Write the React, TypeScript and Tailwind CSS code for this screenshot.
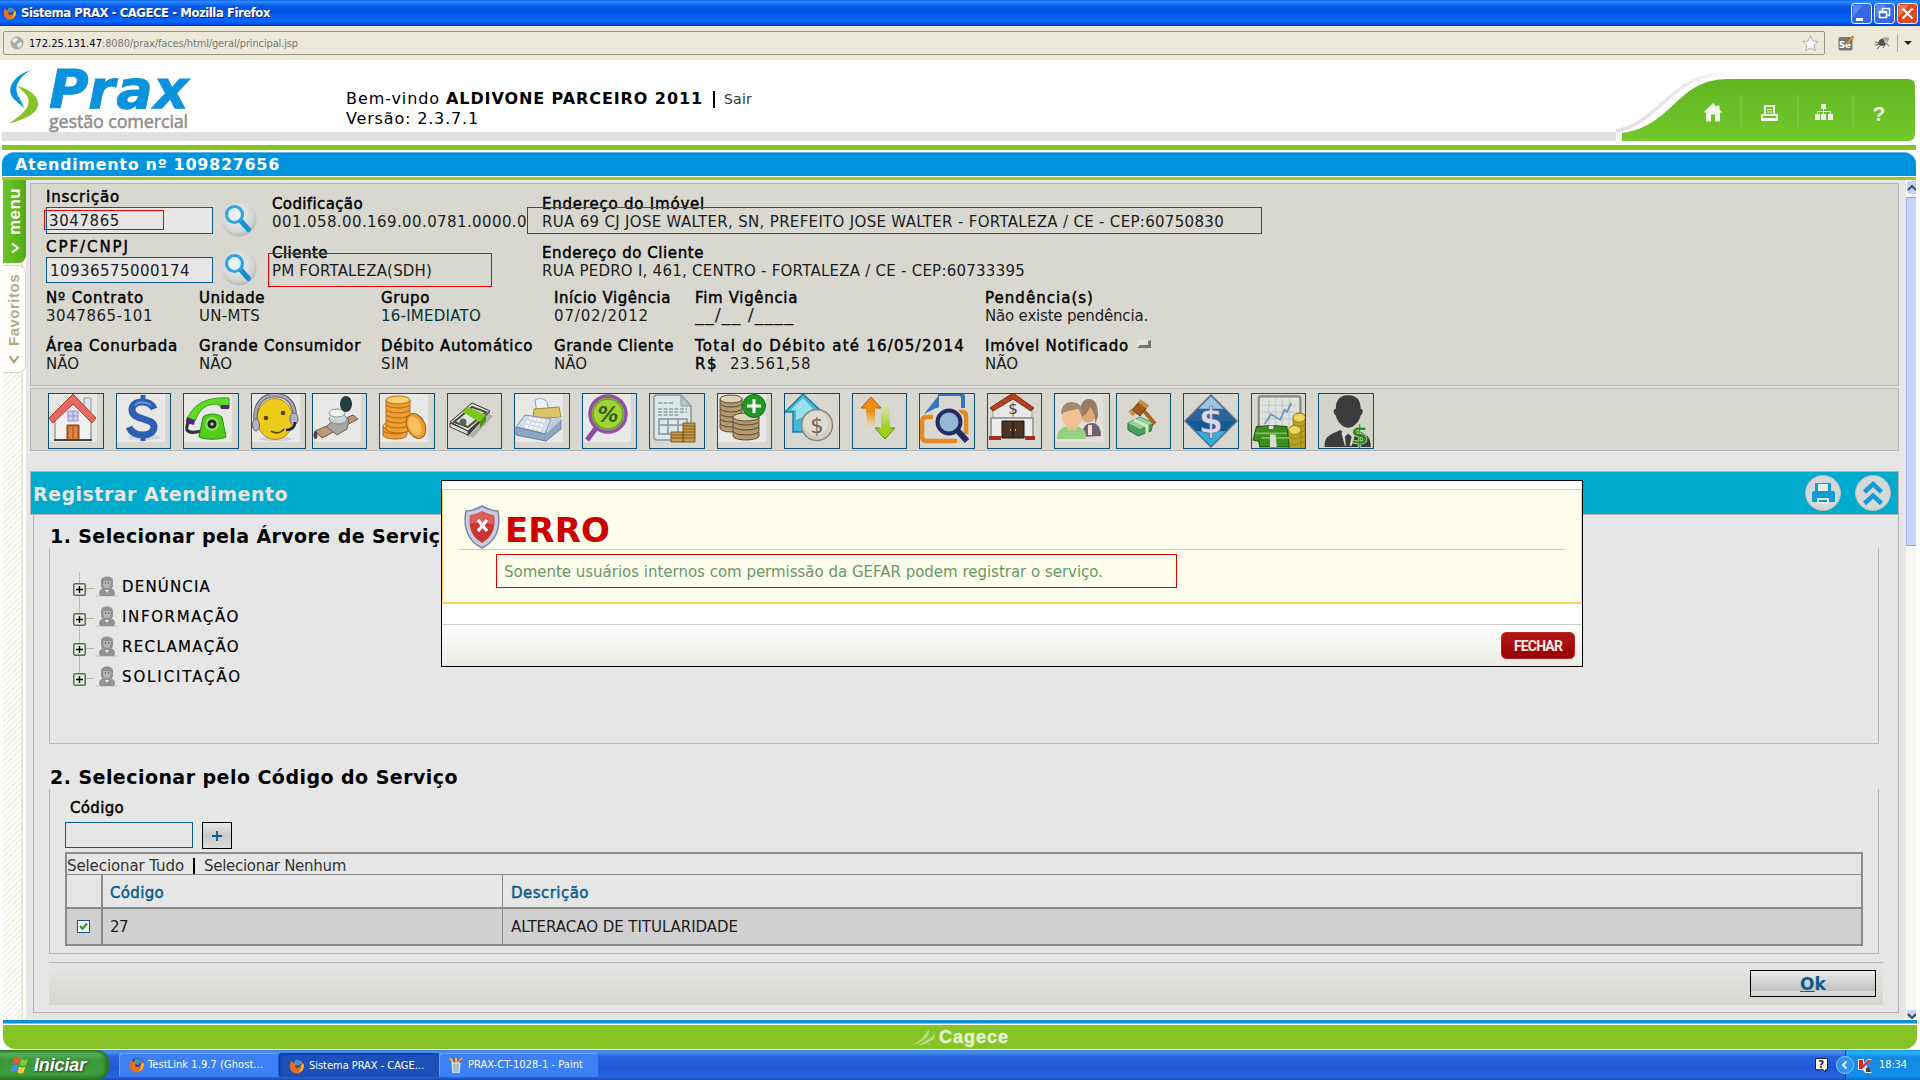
import { useLayoutEffect, useRef, type ReactNode } from "react";

/* Single line of text tracked so that it spans a given length. */
function T({ w, className = "", children }: { w: number; className?: string; children: string }) {
  const ref = useRef<HTMLSpanElement>(null);
  useLayoutEffect(() => {
    const el = ref.current;
    if (!el) return;
    el.style.letterSpacing = "0px";
    const box = el.getBoundingClientRect();
    const natural = Math.max(box.width, getComputedStyle(el).writingMode === "vertical-rl" ? box.height : 0);
    el.style.letterSpacing = `${(w - natural) / children.length}px`;
  }, [w, children]);
  return (
    <span ref={ref} className={`inline-block whitespace-pre ${className}`}>
      {children}
    </span>
  );
}

const LABEL = "block text-[15px] leading-[18px] text-black [-webkit-text-stroke:0.45px_black]";
const VALUE = "block text-[15px] leading-[18px] text-[#1c1c1c]";

function Field({ label, lw, value, vw, vc = "" }: { label: string; lw: number; value: string; vw: number; vc?: string }) {
  return (
    <div className="whitespace-nowrap">
      <div className="flex h-[18px]"><T w={lw} className={LABEL}>{label}</T></div>
      <div className="flex h-[18px]"><T w={vw} className={`${VALUE} ${vc}`}>{value}</T></div>
    </div>
  );
}

function Firefox({ className = "" }: { className?: string }) {
  return (
    <svg viewBox="0 0 16 16" className={`h-4 w-4 shrink-0 ${className}`}>
      <circle cx="8" cy="8" r="7" fill="#1c4a9c" />
      <path d="M6 2a5 4 0 0 1 7 3l-4 3-4-2z" fill="#3d8fd8" />
      <path d="M2.500 2.500 4 5c2-1 3 0 4 1L6 7.500C6 10 9 11 11 9c1.500-2 1-4 0-6 3 1 4.500 4 4 6.500C14 14 10 16 7 15.500 2 15 0 10 1 6z" fill="#e8701a" />
      <path d="M14.500 6c.5 4-1.500 7.500-5 8.500C12 12 13 10 12.500 7z" fill="#fbc83a" />
    </svg>
  );
}

function Magnifier() {
  return (
    <svg viewBox="0 0 36 36" className="h-9 w-9">
      <defs>
        <radialGradient id="disc" cx="45%" cy="40%" r="60%">
          <stop offset="0" stopColor="#f2f2f2" />
          <stop offset=".75" stopColor="#d4d6d6" />
          <stop offset="1" stopColor="#b4bab9" />
        </radialGradient>
      </defs>
      <circle cx="18" cy="18" r="17.500" fill="url(#disc)" />
      <path d="m19 19 8.500 9.500" stroke="#1590d4" strokeWidth="5" strokeLinecap="round" />
      <circle cx="13.500" cy="13.500" r="8" fill="#e9f3f8" stroke="#35a5e0" strokeWidth="3.200" />
    </svg>
  );
}

const pale = <rect width="48" height="48" fill="#e8e8e6" />;

function Dollar({ x, y, s, fill, stroke = "none" }: { x: number; y: number; s: number; fill: string; stroke?: string }) {
  return (
    <text x={x} y={y} fontSize={s} fontWeight="bold" textAnchor="middle" fill={fill} stroke={stroke} strokeWidth=".6">$</text>
  );
}

function Stack({ x, y, n, rx = 9, c = "#f0a030", e = "#a85c10", t = "#ffcf70" }: { x: number; y: number; n: number; rx?: number; c?: string; e?: string; t?: string }) {
  return (
    <g stroke={e} strokeWidth=".9">
      {Array.from({ length: n }, (_, i) => (
        <path key={i} d={`M${x - rx} ${y - i * 5}v4a${rx} 4 0 0 0 ${rx * 2} 0v-4`} fill={c} />
      ))}
      <ellipse cx={x} cy={y - (n - 1) * 5} rx={rx} ry="4" fill={t} />
    </g>
  );
}

const icons: { key: string; art: ReactNode; w?: string; ml?: string }[] = [
  {
    key: "home",
    art: (<>{pale}
      <path d="M35 4h7v14h-7z" fill="#dfe6ea" stroke="#8a979e" />
      <path d="M6 25 24 8l18 17v21H6z" fill="#f0f0ee" stroke="#777" />
      <path d="M24 0 0 24l4 5L24 10l19 19 4-5z" fill="#e66a60" stroke="#b03a34" />
      <path d="M18 31h12v15H18z" fill="#c4682e" stroke="#844018" /><path d="M20 33h3v12h-3zm5 0h3v12h-3z" fill="#de8848" />
      <path d="M19 17h10v10H19z" fill="#c4d4f2" stroke="#a08cc0" /><path d="M24 17v10M19 22h10" stroke="#a08cc0" />
      <path d="M5 46h38" stroke="#444" strokeWidth="2" /></>),
  },
  {
    key: "dollar",
    art: (<>{pale}<ellipse cx="27" cy="43" rx="16" ry="3" fill="#cdd2dc" />
      <path d="M37 15c-2-5-7-7-12-7-6 0-10 3-10 8 0 11 22 7 22 17 0 5-5 8-11 8-7 0-12-3-14-8" fill="none" stroke="#2f60b4" strokeWidth="7" />
      <path d="M26 1v10M26 38v9" stroke="#2f60b4" strokeWidth="5" /><path d="M34 11c-4-3-12-4-16 0" stroke="#6f98dc" strokeWidth="2" fill="none" /></>),
  },
  {
    key: "phone",
    art: (<>{pale}<path d="M10 25c-6 2-8 6-7 11 3 4 9 2 14 1" fill="none" stroke="#333" strokeWidth="3" />
      <path d="M2 27C10 9 22 3 45 4v10h-8l-3-4C22 10 16 14 11 27z" fill="#5edc22" stroke="#3a9a16" />
      <path d="M3 23l8 3-1 5-8-2zM37 11h8v4h-8z" fill="#5b2470" />
      <path d="M19 23c5-4 14-4 19 0l4 20c-8 3-20 3-27 0z" fill="#4fcd1c" stroke="#2f8c10" />
      <circle cx="28" cy="30" r="7" fill="#8cdc60" /><circle cx="28" cy="30" r="4.500" fill="#1f2f18" /><circle cx="28" cy="30" r="1.500" fill="#ddd" /></>),
  },
  {
    key: "agent",
    art: (<>{pale}<ellipse cx="24" cy="45" rx="16" ry="2" fill="#cfcde0" />
      <ellipse cx="23" cy="25" rx="18" ry="20.500" fill="#ecca1c" stroke="#a98a10" />
      <path d="M4 29C1 12 10 1 23 1s22 10 19 26" fill="none" stroke="#666072" strokeWidth="4.500" /><path d="M4 29C1 12 10 1 23 1s22 10 19 26" fill="none" stroke="#aaa4b8" strokeWidth="2.500" />
      <ellipse cx="4" cy="31" rx="3.500" ry="6" fill="#b7b3c4" stroke="#66627a" /><ellipse cx="42" cy="25" rx="4" ry="6" fill="#b7b3c4" stroke="#66627a" />
      <circle cx="14" cy="24" r="2.300" fill="#5a4600" /><circle cx="31" cy="19" r="2.300" fill="#5a4600" />
      <path d="M19 37c5 3 10 2 13-2" fill="none" stroke="#5a4600" strokeWidth="2" /><path d="M43 28c0 6-4 8-9 8" fill="none" stroke="#222" strokeWidth="2.500" /></>),
  },
  {
    key: "meter", w: "w-[55px]", ml: "-ml-1.5",
    art: (<>{pale}<path d="M2 37 40 21l5 4L9 44z" fill="#bd9877" stroke="#75583e" /><path d="M14 33c2-6 16-12 22-8l-2 10-10 6z" fill="#a8a8a0" stroke="#666" />
      <ellipse cx="25" cy="25" rx="9" ry="5" fill="#c8d4d4" stroke="#7a8888" /><path d="M17 18h14v7H17z" fill="#cfdcdc" /><ellipse cx="24" cy="19" rx="8" ry="4" fill="#eef4f4" stroke="#8a9898" />
      <ellipse cx="33" cy="10" rx="6" ry="8" fill="#243c40" /><ellipse cx="2.500" cy="41" rx="2" ry="4" fill="#544" /></>),
  },
  {
    key: "coins",
    art: (<>{pale}<Stack x={15} y={37} n={2} rx={12} /><Stack x={18} y={31} n={6} rx={12} />
      <ellipse cx="36" cy="32" rx="9" ry="13" fill="#ef9a2c" stroke="#a85c10" transform="rotate(-25 36 32)" /><ellipse cx="35" cy="32" rx="6" ry="10" fill="#ffc060" transform="rotate(-25 35 32)" /></>),
  },
  {
    key: "cash",
    art: (<><path d="m25 44 20-22-4-2-20 22z" fill="#888" opacity=".5" /><path d="m2 30 22-21 18 9-22 24z" fill="#3a443c" /><path d="m2 33 18 8v-4L2 29z" fill="#ddd" stroke="#444" /><path d="m2 28 22-19 18 8-22 20z" fill="#dfe5da" stroke="#333" />
      <path d="m6 28 18-15 14 5-18 15z" fill="none" stroke="#454f44" strokeWidth="2" /><path d="m14 18 6-5 18 8-6 7z" fill="#78c81c" /><path d="m32 28 6-7v6l-6 7z" fill="#4d9410" /><circle cx="15" cy="28" r="3.500" fill="#5a645a" /></>),
  },
  {
    key: "register",
    art: (<>{pale}<path d="M20 6c5-3 10-1 12 2l2 12H22z" fill="#eaf3fb" stroke="#8ba4bd" /><path d="m19 15 25-2 2 10-28 2z" fill="#dcc466" stroke="#a08a38" />
      <path d="m10 21 26 4-6 15-29-7z" fill="#d5dbe6" stroke="#8191a8" /><path d="m1 33 29 7 16-15v10L31 47 1 41z" fill="#8fa6c2" stroke="#6b829f" /><path d="m14 24 16 3M12 28l17 4M10 32l17 4" stroke="#fff" strokeWidth="2" strokeDasharray="3 1.500" /><path d="m36 25 10-2v3L31 40z" fill="#bccbdd" /></>),
  },
  {
    key: "percent",
    art: (<>{pale}<path d="M14 33 4 46" stroke="#8c4ca4" strokeWidth="5" /><circle cx="25" cy="20" r="18" fill="#a2d43a" stroke="#9050a8" strokeWidth="3.500" /><circle cx="25" cy="20" r="15" fill="none" stroke="#6c9c28" strokeWidth="1.500" />
      <text x="25" y="28" fontSize="21" fontWeight="bold" fontStyle="italic" textAnchor="middle" fill="#386020">%</text></>),
  },
  {
    key: "report",
    art: (<><path d="M7 1h24l10 11v34H7q-3 0-3-3V4q0-3 3-3z" fill="#dde7e8" stroke="#87989c" strokeWidth="1.500" /><path d="M31 1v11h10z" fill="#b6c6ca" stroke="#87989c" />
      <path d="M8 9h16M8 15h29M8 18h29M8 21h22" stroke="#8e9da1" strokeWidth="1.400" strokeDasharray="4 1.500" /><path d="M9 25h28v15H9zM9 31h28M18 25v15M28 25v15" fill="none" stroke="#8296a0" strokeWidth="1.500" />
      <path d="M21 38h12v10H21zM33 29h12v19H33z" fill="#c79a50" stroke="#7d5720" /><path d="M21 41h12M21 44h12M33 32h12M33 35h12M33 38h12M33 41h12M33 44h12" stroke="#7d5720" /></>),
  },
  {
    key: "coins-add",
    art: (<>{pale}<Stack x={13} y={30} n={6} rx={11} c="#b39a70" e="#4d3e28" t="#ded4bc" /><Stack x={28} y={38} n={4} rx={13} c="#b39a70" e="#4d3e28" t="#ded4bc" />
      <circle cx="36" cy="12" r="11.500" fill="#1e9a24" stroke="#0e7010" /><path d="M36 5v14M29 12h14" stroke="#fff" strokeWidth="3" /></>),
  },
  {
    key: "up-dollar",
    art: (<><path d="M18 0 0 18h8v20h22V18h7z" fill="#45b8d8" stroke="#217d9c" strokeWidth="1.500" /><path d="M18 4 6 16h5v10l17-8v-3z" fill="#9ce0f0" /><circle cx="32" cy="31" r="15.500" fill="#d2cec2" stroke="#88847a" strokeWidth="1.500" /><circle cx="31" cy="29" r="12" fill="#dfdcd2" /><text x="32" y="39" fontSize="21" textAnchor="middle" fill="#66645e">$</text></>),
  },
  {
    key: "arrows",
    art: (<><defs>
      <linearGradient id="upA" x1="0" y1="0" x2="0" y2="1"><stop offset=".5" stopColor="#f08c14" /><stop offset="1" stopColor="#f8c040" stopOpacity=".2" /></linearGradient>
      <linearGradient id="dnA" x1="0" y1="0" x2="0" y2="1"><stop offset="0" stopColor="#c8e840" stopOpacity=".2" /><stop offset=".6" stopColor="#a0d020" /></linearGradient></defs>
      <path d="M18 3 8 14h5l1 18 8-1V14h6z" fill="url(#upA)" /><path d="M13 14H8L18 3l10 11h-5" fill="none" stroke="#b0620c" />
      <path d="M32 45 42 34h-5L36 12h-8v22h-6z" fill="url(#dnA)" /><path d="M37 34h5L32 45 22 34h5" fill="none" stroke="#5c8c14" /></>),
  },
  {
    key: "search-doc",
    art: (<><path d="M18 0h21q4 0 4 4v10" fill="none" stroke="#3a74b8" strokeWidth="4" /><path d="M4 20 19 1v11q0 2-3 2z" fill="#3a74b8" /><path d="M13 23H7q-5 0-5 5v14q0 5 5 5h30M38 18h4q4 0 4 4v18" fill="none" stroke="#e48a20" strokeWidth="4.500" /><circle cx="29" cy="28" r="12.500" fill="#92b8d4" stroke="#dcdcd6" strokeWidth="5" /><circle cx="29" cy="28" r="11.500" fill="#92b8d4" stroke="#242c64" strokeWidth="4" /><path d="m37 36 10 11" stroke="#242c64" strokeWidth="6" /></>),
  },
  {
    key: "bank",
    art: (<><path d="M5 14 25 2l19 12v10H5z" fill="#e8e8e8" stroke="#999" /><path d="M2 14 25-1l21 15-3 3L25 5 5 17z" fill="#b5441e" stroke="#7d2a10" /><text x="25" y="20" fontSize="15" textAnchor="middle" fill="#444">$</text><path d="M3 24h42v19H3z" fill="#ececec" stroke="#8c8c8c" strokeWidth="1.500" /><path d="M14 27h22v17H14z" fill="#4a3426" stroke="#22160e" /><path d="M25 27v17" stroke="#1c120c" /><path d="M22 36h1M27 36h1" stroke="#e0b050" strokeWidth="2" /><path d="M1 42h12v4H1zM37 42h10v4H37z" fill="#a03018" /></>),
  },
  {
    key: "people",
    art: (<><rect width="48" height="48" fill="#e2e0dd" /><g opacity=".85"><path d="M27 43c0-10 4-14 10-14 5 0 9 4 9 13z" fill="#5a4c58" /><circle cx="33" cy="20" r="8.500" fill="#dca06a" /><path d="M24 24C24 10 29 4 34 5c7 0 9 7 9 17l-3 9c1-8-1-14-5-18-2 5-5 8-7 9z" fill="#8d6a4c" /><path d="M35 31v10" stroke="#f4e0d0" strokeWidth="4" /><path d="M2 45c0-9 5-13 15-13s15 4 14 13z" fill="#8bce70" /><path d="M12 30h10v6H12z" fill="#f0b880" /><circle cx="17" cy="24" r="10" fill="#f3bd84" /><path d="M6 21C6 10 12 8 17 8s11 3 11 13c-3-3-4-6-6-6-5 2-12 1-16 6z" fill="#a0785a" /></g></>),
  },
  {
    key: "auction", ml: "-ml-1.5",
    art: (<><path d="m11 29 12-6 13 6-2 8-13 5-10-6z" fill="#4c9c60" stroke="#2c6c40" /><path d="m11 29 12-6 13 6-13 6z" fill="#8cd49c" /><path d="m17 26 13 6v8" stroke="#d8e8c0" strokeWidth="3" fill="none" /><path d="m23 12 15 18" stroke="#a86420" strokeWidth="4" /><path d="m15 16 8-9 7 6-7 9z" fill="#a05c1c" stroke="#603408" /><path d="m13 16 4 5M22 7l9 6" stroke="#c88c44" strokeWidth="4" /></>),
  },
  {
    key: "diamond",
    art: (<><g transform="scale(1.125)"><path d="M24 1 47 24 24 47 1 24z" fill="#0e5c96" stroke="#60708c" strokeWidth="1.500" /><path d="M24 2 46 24H2z" fill="#2a649c" /><path d="M24 2 35 13 13 13z" fill="#9cc4e4" /><path d="M11 33h26L24 46z" fill="#30b0dc" /><Dollar x={24} y={35} s={31} fill="#dcd8f0" stroke="#667" /></g></>),
  },
  {
    key: "chart",
    art: (<><g transform="scale(1.125)"><rect x="6" y="2" width="37" height="31" rx="2" fill="#e0e2dc" stroke="#838b8b" strokeWidth="2" /><path d="M15 4v26M21 4v26M27 4v26M33 4v26M9 10h31M9 16h31M9 22h31" stroke="#bcc4c6" strokeWidth=".8" /><path d="m11 27 6-9 8 5 4-9 2 2 4-8" fill="none" stroke="#7090c4" strokeWidth="1.500" />
      <Stack x={42} y={41} n={5} rx={5.500} c="#b8a020" e="#98841c" t="#e8d860" /><Stack x={38} y={42} n={3} rx={5.500} c="#b8a020" e="#98841c" t="#e8d860" /><path d="m4 29 13-1 14 1 2 18H7l-1-5-5-1z" fill="#3c8c20" stroke="#1e5a10" /><path d="M3 35h28M8 39h25" stroke="#7cc050" strokeWidth="1.500" /><path d="M16 36h5l1 11h-6zM15 28h4v3h-4z" fill="#d4dccc" /></g></>),
  },
  {
    key: "person-dollar",
    art: (<><g transform="scale(1.125)"><rect width="48" height="48" fill="#d2d3cb" /><path d="M26 1c9 0 11 6 11 12 3 0 2 5 0 6-1 5-6 11-11 11s-10-6-11-11c-2-1-3-6 0-6 0-6 2-12 11-12z" fill="#3c3c3c" /><path d="M5 47c0-9 3-10 14-15l7 6 7-6c10 4 13 6 13 15z" fill="#3c3c3c" /><path d="m21 33 5 3 5-3 1 3-3 10h-6l-3-11z" fill="#d8d8d4" /><path d="m26 35 3 3-2 9h-3l-1-9z" fill="#3c3c3c" /><Dollar x={36} y={44} s={23} fill="#2c8a14" stroke="#cfe0c8" /></g></>),
  },
];

function TreeRow({ text, w, last }: { text: string; w: number; last?: boolean }) {
  return (
    <div className="flex h-[30px] items-center">
      <div className="relative flex h-[30px] w-6 items-center">
        <span className={`absolute left-[6px] top-0 w-px bg-[#bdbdae] ${last ? "h-4" : "h-[30px]"}`} />
        <span className="absolute left-[13px] top-4 h-px w-2 bg-[#bdbdae]" />
        <svg viewBox="0 0 13 13" className="relative mt-1 h-[13px] w-[13px]">
          <rect x=".75" y=".75" width="11.500" height="11.500" rx="1.500" fill="#eceade" stroke="#47755a" strokeWidth="1.500" />
          <path d="M3 6.500h7M6.500 3v7" stroke="#000" strokeWidth="1.400" />
        </svg>
      </div>
      <svg viewBox="0 0 22 22" className="-ml-px mr-1 h-[22px] w-[22px]">
        <path d="M0 19h22v2H0z" fill="#d4d4d4" />
        <path d="M5 5q0-4.500 6-4.500T17 5v4.500q0 2-1.500 3 3.500 1.500 3.500 4.500 0 3-2.500 3h-11Q3 20 3 17q0-3 3.500-4.500Q5 11.500 5 9.500z" fill="#929292" />
        <path d="M7.500 5h7v4q0 3-3.500 3T7.500 9z" fill="#b6b6b6" />
        <path d="M9.500 6v2M12.500 6v2" stroke="#666" />
        <path d="m9 14 2 3 2-3z" fill="#eee" />
      </svg>
      <T w={w} className="text-[15px] leading-[18px] text-black [-webkit-text-stroke:0.2px_black]">{text}</T>
    </div>
  );
}

function TitleBar() {
  return (
    <header className="flex h-[26px] shrink-0 items-center bg-[linear-gradient(180deg,#1468f0_0%,#2a8cff_7%,#0a5ce8_22%,#0055e0_45%,#0468ff_80%,#0050e8_92%,#0038c0_100%)] pl-[3px] pr-1">
      <Firefox className="h-[14px] w-[14px]" />
      <T w={249} className="ml-1 font-['DejaVu_Sans_Condensed','DejaVu_Sans',sans-serif] text-[13px] font-bold leading-5 text-white [text-shadow:1px_1px_0_#0a1e70]">Sistema PRAX - CAGECE - Mozilla Firefox</T>
      <div className="ml-auto mr-[-2px] flex gap-[2px]">
        {[0, 1].map((i) => (
          <svg key={i} viewBox="0 0 21 21" className="h-[21px] w-[21px]">
            <rect x=".5" y=".5" width="20" height="20" rx="3" fill="#3468e4" stroke="#fff" />
            <path d="M2 2h10L2 14z" fill="#6c98f4" opacity=".7" />
            {i === 0 ? <path d="M5 15h7v3H5z" fill="#fff" /> : <path d="M8.500 8V5.500h7v7H13M5.500 8.500h7v6h-7zM5 9.500h8" fill="none" stroke="#fff" strokeWidth="1.500" />}
          </svg>
        ))}
        <svg viewBox="0 0 21 21" className="h-[21px] w-[21px]">
          <rect x=".5" y=".5" width="20" height="20" rx="3" fill="#dc4820" stroke="#fff" />
          <path d="M2 2h10L2 14z" fill="#f08c6c" opacity=".7" />
          <path d="m5.500 5.500 10 10m0-10-10 10" stroke="#fff" strokeWidth="2.200" />
        </svg>
      </div>
    </header>
  );
}

function AddressBar() {
  return (
    <div className="flex h-[34px] shrink-0 items-center bg-[#ece9d8] pl-[3px]">
      <div className="flex h-6 w-[1822px] items-center rounded-[2px] border border-[#98968a] bg-[#ece9d8] pl-1.5">
        <svg viewBox="0 0 14 14" className="h-[14px] w-[14px]">
          <circle cx="7" cy="7" r="6.500" fill="#a8a8a8" />
          <path d="M3 3q3-2 5 0L6 6 4 7 2 5zM8 7l4-1q0 4-3 6L7 10z" fill="#eee" />
        </svg>
        <T w={73} className="ml-[5px] mt-[2px] font-['DejaVu_Sans_Condensed','DejaVu_Sans',sans-serif] text-[11px] text-black">172.25.131.47</T>
        <T w={196} className="mt-[2px] font-['DejaVu_Sans_Condensed','DejaVu_Sans',sans-serif] text-[11px] text-[#777]">:8080/prax/faces/html/geral/principal.jsp</T>
        <svg viewBox="0 0 18 18" className="ml-auto mr-[5px] h-[17px] w-[17px]">
          <path d="m9 1 2.400 5.300 5.600.6-4.200 3.900 1.200 5.700L9 13.600l-5 2.900 1.200-5.700L1 6.900l5.600-.6z" fill="#fff" stroke="#a8a8b0" />
        </svg>
      </div>
      <svg viewBox="0 0 16 16" className="ml-[13px] h-4 w-4">
        <rect x=".5" y="2" width="14" height="13.500" rx="2" fill="#777" />
        <text x="1" y="13" fontSize="8.500" fontWeight="bold" fill="#fff">Se</text>
        <path d="m8 8 6-7 2 1-6 7z" fill="#dca838" stroke="#76501c" strokeWidth=".5" />
      </svg>
      <svg viewBox="0 0 16 14" className="ml-5 h-[14px] w-4">
        <path d="m1 6 5 1M3 13l4-4M9 12l2-3M15 10l-3-3M1 9l5-1" stroke="#666" />
        <ellipse cx="9" cy="6" rx="5" ry="3.500" fill="#505050" transform="rotate(-25 9 6)" />
        <ellipse cx="12" cy="3" rx="3" ry="2" fill="#aaa" /><circle cx="12" cy="6" r="1.600" fill="#ccc" />
      </svg>
      <span className="ml-[7px] h-[18px] w-px bg-[#b0ae9e]" />
      <svg viewBox="0 0 8 4" className="ml-[6px] h-1 w-2"><path d="M0 0h8L4 4z" fill="#222" /></svg>
    </div>
  );
}

function Banner() {
  return (
    <div className="relative h-[85px] shrink-0 bg-white">
      <div className="flex h-[72px] items-start">
        <svg viewBox="0 0 34 60" className="ml-2 mt-[7px] h-[60px] w-[32px]">
          <path d="M25 1C9 6 0 17 3 27c2 6 9 9 14 15-2-9-9-13-8-22C10 13 16 6 25 1z" fill="#0a93dc" />
          <path d="M10 18c8 3 20 7 22 18 1 11-14 18-31 22 10-7 21-14 21-23 0-8-8-12-12-17z" fill="#86c426" />
        </svg>
        <div className="ml-[9px] flex w-[297px] flex-col items-start">
          <T w={141} className="mt-2 h-11 font-['DejaVu_Sans',sans-serif] text-[54px] font-bold italic leading-[44px] text-[#0a93dc] [-webkit-text-stroke:1px_#0a93dc]">Prax</T>
          <T w={139} className="font-['Open_Sans',sans-serif] text-[18px] leading-[18px] text-[#8f8f8f] [-webkit-text-stroke:0.5px_#8f8f8f]">gestão comercial</T>
        </div>
        <div className="mt-[29px] text-[17px] leading-5 text-black">
          <div className="flex h-5 items-center">
            <T w={100} className="text-[16px]">Bem-vindo </T>
            <T w={257} className="text-[16px] font-bold">ALDIVONE PARCEIRO 2011</T>
            <span className="ml-[10px] h-[17px] w-[2px] bg-black" />
            <T w={28} className="ml-[9px] text-[14px] text-[#333]">Sair</T>
          </div>
          <div className="flex h-5"><T w={133} className="text-[16px]">Versão: 2.3.7.1</T></div>
        </div>
      </div>
      <div className="ml-[2px] h-[9px] w-[1614px] bg-[#e0e0e0]" />
      <svg viewBox="0 0 308 76" className="absolute left-[1610px] top-[8px] h-[76px] w-[308px]">
        <defs>
          <linearGradient id="tab" x1="0" y1="0" x2="0" y2="1"><stop offset="0" stopColor="#62b522" /><stop offset="1" stopColor="#72c82c" /></linearGradient>
          <linearGradient id="shade" x1="0" y1="0" x2="1" y2="0"><stop offset="0" stopColor="#e0dee2" /><stop offset=".5" stopColor="#eae8ec" /><stop offset="1" stopColor="#fff" /></linearGradient>
        </defs>
        <path d="M6 63C50 55 60 7 114 6h20" fill="none" stroke="url(#shade)" strokeWidth="3.500" />
        <path d="M8 73V65C60 58 66 10 120 9h178q8 0 8 8v50q0 6-7 6H12z" fill="#fff" />
        <path d="M12 73V65C64 58 66 11 118 11h180q7 0 7 7v48q0 7-7 7z" fill="url(#tab)" />
        <path d="M131 27v32M188 27v32M243 27v32" stroke="#82d048" />
        <g fill="#f2f8ec">
          <path d="m103 35-9.500 9.500h2.500v9h5v-7h4v7h5v-9h2.500l-3-3v-4h-3v1.500z" />
          <path d="M151 53v-7h3v-9h11v9h3v7zm5-7h7v-7h-7zm-3 4h13v-2h-13zM157 41h5v1h-5zm0 2.500h5v1h-5z" fillRule="evenodd" />
          <path d="M211 36h5v5h-5zM205 46h5v6h-5zM211 46h5v6h-5zM218 46h5v6h-5zM213 41h1v5h-1zM207 43h14v1h-14zM207 43h1v4h-1zM220 43h1v4h-1z" />
        </g>
        <text x="269" y="53" fontSize="21" fontWeight="bold" textAnchor="middle" fill="#f2f8ec" fontFamily="Liberation Sans">?</text>
      </svg>
    </div>
  );
}

function SideTabs() {
  return (
    <aside className="relative ml-[3px] w-[23px] shrink-0">
      <div className="h-full w-5 border-r-2 border-[#ece8d4] bg-[repeating-linear-gradient(135deg,#fff_0px,#fff_2px,#f4f2e8_2px,#f4f2e8_4px)]" />
      <div className="absolute left-0 top-0 flex w-[23px] flex-col gap-[2px]">
        <div className="flex h-[83px] flex-col items-center rounded-br-lg bg-gradient-to-r from-[#6cc428] to-[#54aa18] pt-2">
          <span className="flex rotate-180 [writing-mode:vertical-rl]">
            <T w={47} className="font-['Liberation_Sans',sans-serif] text-[17px] font-bold leading-[18px] text-white">menu</T>
          </span>
          <svg viewBox="0 0 10 12" className="mt-[7px] h-3 w-[10px]"><path d="M2 1.500 8 6l-6 4.500" fill="none" stroke="#fff" strokeWidth="2" /></svg>
        </div>
        <div className="flex h-[108px] flex-col items-center rounded-r-lg border border-l-0 border-[#dcd4ba] bg-[#fffefb] pt-2">
          <span className="flex rotate-180 [writing-mode:vertical-rl]">
            <T w={72} className="font-['Liberation_Sans',sans-serif] text-[15px] font-bold leading-[18px] text-[#b5aa88]">Favoritos</T>
          </span>
          <svg viewBox="0 0 12 10" className="mt-2 h-[10px] w-3"><path d="m1.500 2 4.500 6 4.500-6" fill="none" stroke="#a99d78" strokeWidth="2" /></svg>
        </div>
      </div>
    </aside>
  );
}

const RED = "pointer-events-none absolute border border-[#f00000]";

function InfoPanel() {
  return (
    <section className="h-[203px] w-[1869px] border border-[#b5b5b5] bg-[#d8d8d0] pl-[15px]">
      <div className="flex h-[105px]">
        <div className="mt-1 w-[167px]">
          <div className="flex h-[18px]"><T w={74} className={LABEL}>Inscrição</T></div>
          <div className="mt-px flex h-[27px] items-center border border-[#0a5c8c] bg-[#e6e6e6] pl-[2px] pt-px"><T w={71} className={VALUE}>3047865</T></div>
          <div className="mt-1 flex h-[18px]"><T w={84} className={LABEL}>CPF/CNPJ</T></div>
          <div className="mt-px flex h-[26px] items-center border border-[#0a5c8c] bg-[#e6e6e6] pl-[3px] pt-[2px]"><T w={140} className={VALUE}>10936575000174</T></div>
        </div>
        <div className="ml-2 flex w-[51px] flex-col gap-[13px] pt-[17px]"><Magnifier /><Magnifier /></div>
        <div className="flex w-[270px] flex-col gap-[13px] pt-[11px]">
          <Field label="Codificação" lw={91} value="001.058.00.169.00.0781.0000.0" vw={255} />
          <Field label="Cliente" lw={56} value="PM FORTALEZA(SDH)" vw={160} />
        </div>
        <div className="flex flex-col gap-[13px] pt-[11px]">
          <Field label="Endereço do Imóvel" lw={163} value="RUA 69 CJ JOSE WALTER, SN, PREFEITO JOSE WALTER - FORTALEZA / CE - CEP:60750830" vw={682} />
          <Field label="Endereço do Cliente" lw={162} value="RUA PEDRO I, 461, CENTRO - FORTALEZA / CE - CEP:60733395" vw={483} />
        </div>
      </div>
      <div className="grid grid-cols-[153px_182px_173px_141px_290px_auto] gap-y-3">
        <Field label="Nº Contrato" lw={98} value="3047865-101" vw={107} />
        <Field label="Unidade" lw={66} value="UN-MTS" vw={61} />
        <Field label="Grupo" lw={49} value="16-IMEDIATO" vw={100} vc="text-[#003333]!" />
        <Field label="Início Vigência" lw={117} value="07/02/2012" vw={95} />
        <Field label="Fim Vigência" lw={103} value="__/__ /____" vw={99} vc="text-[18px]! leading-[16px]!" />
        <Field label="Pendência(s)" lw={109} value="Não existe pendência." vw={163} />
        <Field label="Área Conurbada" lw={132} value="NÃO" vw={33} />
        <Field label="Grande Consumidor" lw={162} value="NÃO" vw={33} />
        <Field label="Débito Automático" lw={152} value="SIM" vw={28} />
        <Field label="Grande Cliente" lw={120} value="NÃO" vw={33} />
        <div>
          <div className="flex h-[18px]"><T w={270} className={LABEL}>Total do Débito até 16/05/2014</T></div>
          <div className="flex h-[18px]"><T w={23} className={LABEL}>R$</T><T w={81} className={`ml-3 ${VALUE}`}>23.561,58</T></div>
        </div>
        <div className="flex">
          <Field label="Imóvel Notificado" lw={144} value="NÃO" vw={33} />
          <svg viewBox="0 0 14 8" className="ml-2 mt-[3px] h-2 w-[14px]"><path d="M0 0h14v8H0z" fill="#e2e2dc" /><path d="M14 0v8H0l3-3h8V1z" fill="#75756c" /></svg>
        </div>
      </div>
    </section>
  );
}

function Toolbar() {
  return (
    <section className="mt-[2px] flex h-[63px] w-[1869px] items-start border border-[#b5b5b5] bg-[#d8d8d0] pl-[17px] pt-1">
      {icons.map((it) => (
        <button key={it.key} className={`mr-[11.93px] h-14 shrink-0 overflow-hidden border border-[#0a5078] ${it.w ?? "w-[55.600px]"} ${it.ml ?? ""}`}>
          <svg viewBox="0 0 54 54" className="h-[54px] w-[54px] font-['DejaVu_Sans',sans-serif]">{it.art}</svg>
        </button>
      ))}
    </section>
  );
}

function ServiceSection() {
  return (
    <section className="mt-5 w-[1869px]">
      <div className="flex h-11 items-center border border-[#b5b5b5] bg-[#00aacc] pl-[2px]">
        <T w={255} className="mt-[2px] text-[19px] font-bold text-[#e6e6e6]">Registrar Atendimento</T>
        <div className="ml-auto flex gap-[14px] pr-[7px]">
          <svg viewBox="0 0 36 36" className="h-9 w-9">
            <circle cx="18" cy="18" r="17.500" fill="#d4d8d9" stroke="#b4bcc0" />
            <path d="M10 8h16v8h2q2 0 2 2v9H7v-9q0-2 2-2h1z" fill="#139cd4" /><path d="M13 9h10v7H13zM12 23h12v6H12z" fill="#e8eef0" /><path d="M14 25h8v2h-8z" fill="#139cd4" />
          </svg>
          <svg viewBox="0 0 36 36" className="h-9 w-9">
            <circle cx="18" cy="18" r="17.500" fill="#d4d8d9" stroke="#b4bcc0" />
            <path d="m9.500 17 8.500-8 8.500 8M9.500 28.500l8.500-8 8.500 8" fill="none" stroke="#139cd4" strokeWidth="4.500" />
          </svg>
        </div>
      </div>
      <div className="ml-[3px] h-[498px] border border-t-0 border-[#b5b5b5] pl-[15px] pt-[10px]">
        <div className="flex h-[23px] items-center"><T w={405} className="pl-px text-[19px] font-bold text-black">1. Selecionar pela Árvore de Serviço</T></div>
        <div className="h-[196px] w-[1830px] border border-t-0 border-[#b8b8b8] pl-[23px] pt-6">
          <TreeRow text="DENÚNCIA" w={89} />
          <TreeRow text="INFORMAÇÃO" w={118} />
          <TreeRow text="RECLAMAÇÃO" w={118} />
          <TreeRow text="SOLICITAÇÃO" w={120} last />
        </div>
        <div className="mt-[22px] flex h-[23px] items-center"><T w={409} className="pl-px text-[19px] font-bold text-black">2. Selecionar pelo Código do Serviço</T></div>
        <div className="h-[165px] w-[1830px] border border-t-0 border-[#b8b8b8] pl-[15px] pt-[10px]">
          <div className="ml-[5px] flex h-[18px]"><T w={54} className={LABEL}>Código</T></div>
          <div className="mt-[5px] flex gap-[9px]">
            <div className="h-[26px] w-32 border border-[#0a5c8c] bg-[#e6e6e6]" />
            <button className="flex h-[27px] w-[30px] items-center justify-center border border-black bg-gradient-to-b from-[#e8e8e8] via-[#c8c8c8] to-[#dcdcdc]">
              <svg viewBox="0 0 10 10" className="h-[10px] w-[10px]"><path d="M5 0v10M0 5h10" stroke="#0a5c8c" strokeWidth="1.800" /></svg>
            </button>
          </div>
          <div className="mt-[3px] h-[94px] w-[1798px] border-2 border-[#8a8a8a]">
            <div className="flex h-[21px] items-end border-b border-[#8a8a8a]">
              <T w={117} className="-mb-px text-[15px] leading-[18px] text-[#333]">Selecionar Tudo</T>
              <span className="ml-[9px] mr-[9px] h-4 w-[2px] bg-black" />
              <T w={142} className="-mb-px text-[15px] leading-[18px] text-[#333]">Selecionar Nenhum</T>
            </div>
            <div className="flex h-[34px] items-stretch border-b-2 border-[#8a8a8a]">
              <div className="w-9 border-r-2 border-[#8a8a8a]" />
              <div className="flex w-[400px] items-center border-r border-[#8a8a8a] pl-[7px] pt-1"><T w={54} className="text-[15px] text-[#0a5c8c] [-webkit-text-stroke:0.45px_#0a5c8c]">Código</T></div>
              <div className="flex items-center pl-2 pt-1"><T w={78} className="text-[15px] text-[#0a5c8c] [-webkit-text-stroke:0.45px_#0a5c8c]">Descrição</T></div>
            </div>
            <div className="flex h-[35px] items-stretch bg-[#d0d0d0]">
              <div className="flex w-9 items-center border-r-2 border-[#8a8a8a] pl-[10px]">
                <svg viewBox="0 0 13 13" className="h-[13px] w-[13px]"><rect x=".5" y=".5" width="12" height="12" fill="#f4f4f2" stroke="#1c5180" /><path d="m3 6 2.500 3L10 3.500" fill="none" stroke="#21a121" strokeWidth="2" /></svg>
              </div>
              <div className="flex w-[400px] items-center border-r border-[#8a8a8a] pl-[7px]"><T w={18} className={VALUE}>27</T></div>
              <div className="flex items-center pl-2"><T w={227} className={VALUE}>ALTERACAO DE TITULARIDADE</T></div>
            </div>
          </div>
        </div>
        <div className="mt-2 flex h-[43px] w-[1834px] items-start justify-end border-t border-[#b5b5b5] bg-gradient-to-b from-[#e6e6e6] to-[#d6d6cc] pr-[7px] pt-[7px]">
          <button className="flex h-[27px] w-[126px] items-center justify-center border border-black bg-[linear-gradient(180deg,#eaeaea,#c2c2c2_78%,#dadada_80%,#d4d4d4)] pt-[3px] text-[17px] font-bold text-[#0a5c8c]">
            <span className="underline">O</span>k
          </button>
        </div>
      </div>
    </section>
  );
}

function Scrollbar() {
  return (
    <div className="ml-auto mr-1 flex w-[10px] flex-col overflow-hidden bg-[#f8f7f3]">
      <div className="flex h-[15px] items-center justify-center rounded-bl-sm border border-r-0 border-white bg-[#c3d3fb]">
        <svg viewBox="0 0 9 8" className="h-2 w-[9px]"><path d="m1 6 4-4 4 4" fill="none" stroke="#40536c" strokeWidth="2.200" /></svg>
      </div>
      <div className="mt-[2px] h-[349px] border-y border-l border-y-[#8aa8e4] border-l-[#a8bcf0] bg-[#c5d4fb]" />
      <div className="mt-auto flex h-[10px] items-center justify-center border border-r-0 border-white bg-[#c3d3fb]">
        <svg viewBox="0 0 9 8" className="mt-1 h-2 w-[9px]"><path d="m1 2 4 4 4-4" fill="none" stroke="#40536c" strokeWidth="2.200" /></svg>
      </div>
    </div>
  );
}

function ErrorDialog() {
  return (
    <div className="absolute left-[441px] top-[480px] flex h-[187px] w-[1142px] flex-col border border-black bg-white pt-2">
      <div className="h-[115px] border border-b-2 border-[#ffcc66] bg-[#fffdec] pl-4 pr-4">
        <div className="flex h-[60px] items-start border-b border-[#ccc] pl-1 pt-[15px]">
          <svg viewBox="0 0 38 44" className="h-11 w-[38px] shrink-0">
            <path d="M19 1c5 3 10 5 16 5 3 17-2 30-16 37C5 36 0 23 3 6c6 0 11-2 16-5z" fill="#c8cede" stroke="#7c86a8" strokeWidth="1.500" />
            <path d="M19 6c4 2 8 4 12 4 2 13-2 22-12 28C9 32 5 23 7 10c4 0 8-2 12-4z" fill="#cc3434" />
            <path d="M19 6c4 2 8 4 12 4 0 4 0 7-1 10-8-3-16-3-23-1V10c4 0 8-2 12-4z" fill="#e47070" opacity=".7" />
            <path d="m15 15 9 11m0-11-9 11" stroke="#fff" strokeWidth="3.200" />
          </svg>
          <T w={105} className="ml-1 text-[34px] font-bold leading-[50px] text-[#cc0000]">ERRO</T>
        </div>
        <div className="ml-[37px] mt-1 flex h-[34px] w-[681px] items-center border border-[#e60000] pl-[7px] pt-[2px]">
          <T w={599} className="text-[15px] text-[#669966]">Somente usuários internos com permissão da GEFAR podem registrar o serviço.</T>
        </div>
      </div>
      <div className="mt-5 flex flex-1 items-start justify-end border-t border-[#ccc] bg-gradient-to-b from-white to-[#ebebe4] pr-[7px] pt-[7px]">
        <button className="flex h-[27px] w-[74px] items-center justify-center rounded-[5px] border border-[#b82828] bg-gradient-to-b from-[#b41818] to-[#960000]">
          <T w={48} className="font-['Roboto',sans-serif] text-[14px] font-bold leading-4 text-[#f8e8e8]">FECHAR</T>
        </button>
      </div>
    </div>
  );
}

function FooterBar() {
  return (
    <footer className="h-[31px] shrink-0 bg-white px-[3px] pt-px">
      <div className="h-[4px] border-b border-[#7cc4ec] bg-[#0a8fdc]" />
      <div className="mt-px flex h-6 items-center justify-center rounded-b-xl bg-[#86c426]">
        <svg viewBox="0 0 28 18" className="h-[18px] w-7"><path d="M1 17C8 14 13 9 18 1c0 5-1 8-3 11 4-1 7-4 9-7 0 5-2 9-6 12z" fill="#b8dc84" /><path d="M3 17c8-1 12-5 16-10M12 17c5-1 9-3 13-7" stroke="#86c426" fill="none" strokeWidth="1.500" /></svg>
        <T w={70} className="font-['Liberation_Sans',sans-serif] text-[18px] font-bold leading-5 text-[#e4f2cc] [-webkit-text-stroke:0.5px_#e4f2cc]">Cagece</T>
      </div>
    </footer>
  );
}

const TASK = "font-['DejaVu_Sans_Condensed','DejaVu_Sans',sans-serif] text-[11px] leading-4 text-white";

function Taskbar() {
  return (
    <div className="flex h-[30px] shrink-0 items-stretch bg-[linear-gradient(180deg,#3c80e8_0%,#4890f4_8%,#2862dc_22%,#2058d8_60%,#2464e4_90%,#1c48b0_100%)]">
      <div className="flex w-[109px] items-center rounded-r-xl bg-[linear-gradient(180deg,#2c7c2c_0%,#58b058_12%,#3c963c_35%,#3ca03c_80%,#2c7828_100%)] pl-[10px] shadow-[inset_-3px_0_4px_#226a22]">
        <svg viewBox="0 0 20 18" className="h-[18px] w-5">
          <path d="M4 2q3-2 6 0L8.500 8q-3-2-6 0z" fill="#ec5830" /><path d="M11 3q3 2 7 0l-2 6q-3 2-6.500 0z" fill="#7cc83c" />
          <path d="M2 9.500q3-2 6 0L6.500 16q-3-2-6 0z" fill="#4c8cf0" /><path d="M9 10.500q3 2 6.500 0l-2 6q-3 2-6 0z" fill="#fccc34" />
        </svg>
        <T w={52} className="ml-1 font-['Liberation_Sans',sans-serif] text-[18px] font-bold italic leading-6 text-white [text-shadow:1px_1px_2px_#1c401c]">Iniciar</T>
      </div>
      <div className="ml-[10px] flex items-start pt-[3px]">
        <div className="flex h-6 w-[159px] items-center rounded-[3px] bg-[#3c80f4] pl-[10px] shadow-[inset_1px_1px_1px_#6ca4fc]"><Firefox /><T w={115} className={`ml-[3px] ${TASK}`}>TestLink 1.9.7 (Ghost...</T></div>
        <div className="ml-px flex h-6 w-[160px] items-center rounded-[3px] bg-[#1c50b8] pl-[10px] pt-[2px] shadow-[inset_1px_1px_2px_#10348c]"><Firefox /><T w={115} className={`ml-[4px] ${TASK}`}>Sistema PRAX - CAGE...</T></div>
        <div className="flex h-6 w-[159px] items-center rounded-[3px] bg-[#3c80f4] pl-[10px] shadow-[inset_1px_1px_1px_#6ca4fc]">
          <svg viewBox="0 0 14 16" className="h-4 w-[14px]"><path d="M4 6 1 1M7 6V1M9 6l4-5" stroke="#e8c040" strokeWidth="2" /><path d="m6 5-2-5M10 7l2-4" stroke="#d04028" strokeWidth="1.500" /><path d="M3 6h8l-1 10H4z" fill="#a8bccc" stroke="#e8eef4" /></svg>
          <T w={115} className={`ml-[5px] ${TASK}`}>PRAX-CT-1028-1 - Paint</T>
        </div>
      </div>
      <div className="ml-auto flex items-center">
        <svg viewBox="0 0 14 16" className="mr-[8px] h-[15px] w-[13px]"><path d="M.5.5h13v12h-2V15l-3-2.500h-8z" fill="#ffffe0" stroke="#111" /><text x="3.500" y="10.500" fontSize="11" fontWeight="bold" fill="#111070">?</text></svg>
        <div className="ml-[9px] flex h-full w-[75px] items-center border-l border-[#0a3c98] bg-[linear-gradient(180deg,#1890e8_0%,#28b4f8_8%,#1488e4_25%,#1490ec_85%,#0c70c8_100%)]">
          <svg viewBox="0 0 18 18" className="-ml-[10px] h-[18px] w-[18px] shrink-0"><circle cx="9" cy="9" r="8.500" fill="#2c94f0" stroke="#8cc8fc" /><path d="M10.500 5.500 7 9l3.500 3.500" fill="none" stroke="#fff" strokeWidth="2" /></svg>
          <svg viewBox="0 0 15 15" className="ml-[4px] h-[15px] w-[15px] shrink-0"><path d="M0 1h6v4l4-4h4L8 7l6 8H7L5 12H0z" fill="#e8e8e8" /><path d="M1 2h4v5l5-5h3L4 11H1z" fill="#d42430" /><path d="m8 10 3-1 2 5H8z" fill="#444" /></svg>
          <T w={28} className={`ml-[6px] ${TASK}`}>18:34</T>
        </div>
      </div>
    </div>
  );
}

export default function App() {
  return (
    <div className="relative flex h-[1080px] w-[1920px] flex-col overflow-hidden bg-white font-['DejaVu_Sans',sans-serif]">
      <TitleBar />
      <AddressBar />
      <Banner />
      <div className="mx-[2px] h-[5px] w-[1914px] shrink-0 bg-[#86c426]" />
      <div className="ml-[2px] mt-[2px] flex h-6 w-[1914px] shrink-0 items-center rounded-t-xl border-t border-[#60b4e0] bg-[#0093e0] pl-[13px]">
        <T w={265} className="text-[16px] font-bold leading-5 text-white">Atendimento nº 109827656</T>
      </div>
      <div className="ml-[2px] mt-px h-[3px] w-[1914px] shrink-0 bg-[#8ecb34]" />
      <main className="flex h-[839px] shrink-0">
        <SideTabs />
        <div className="w-[1880px] shrink-0 bg-[#e6e6e6] pl-1 pt-[3px]">
          <InfoPanel />
          <Toolbar />
          <ServiceSection />
        </div>
        <Scrollbar />
      </main>
      <FooterBar />
      <Taskbar />
      <div className={`${RED} left-[44px] top-[210px] h-[20px] w-[120px]`} />
      <div className={`${RED} left-[527px] top-[207px] h-[27px] w-[735px]`} />
      <div className={`${RED} left-[268px] top-[253px] h-[34px] w-[224px]`} />
      <ErrorDialog />
    </div>
  );
}
